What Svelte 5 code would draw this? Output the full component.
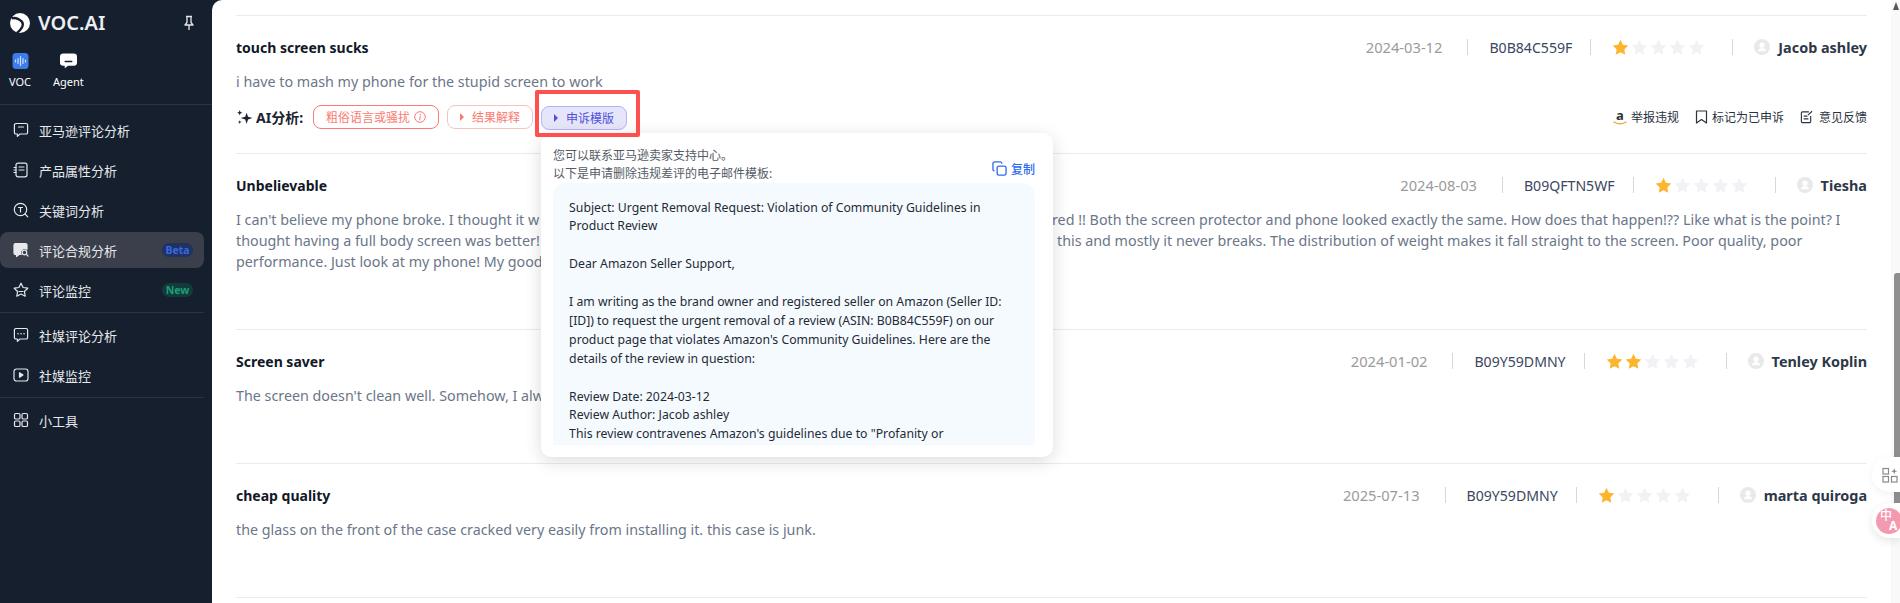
<script>
	const menuTop = [
		{ label: "亚马逊评论分析", icon: "chat" },
		{ label: "产品属性分析", icon: "doc" },
		{ label: "关键词分析", icon: "search" },
		{ label: "评论合规分析", icon: "shield", active: true, badge: "Beta" },
		{ label: "评论监控", icon: "star", badge: "New" }
	];
	const menuSocial = [
		{ label: "社媒评论分析", icon: "dots" },
		{ label: "社媒监控", icon: "play" }
	];
	const templateLines = [
		"Subject: Urgent Removal Request: Violation of Community Guidelines in",
		"Product Review",
		"",
		"Dear Amazon Seller Support,",
		"",
		"I am writing as the brand owner and registered seller on Amazon (Seller ID:",
		"[ID]) to request the urgent removal of a review (ASIN: B0B84C559F) on our",
		"product page that violates Amazon's Community Guidelines. Here are the",
		"details of the review in question:",
		"",
		"Review Date: 2024-03-12",
		"Review Author: Jacob ashley",
		'This review contravenes Amazon\'s guidelines due to "Profanity or'
	];
	const starPath = "M8 .8l2.2 4.7 5.1.7-3.7 3.6.9 5.1L8 12.5l-4.5 2.4.9-5.1L.7 6.2l5.1-.7z";
</script>

{#snippet menuIcon(name)}
	<svg class="menu-icon" viewBox="0 0 16 16" fill="none" stroke="currentColor" stroke-width="1.2" stroke-linejoin="round" stroke-linecap="round">
		{#if name === "chat"}
			<path d="M3 1.5h10a1.6 1.6 0 0 1 1.6 1.6v7.3a1.6 1.6 0 0 1-1.6 1.6H7l-2.6 2.4v-2.4H3a1.6 1.6 0 0 1-1.6-1.6V3.1A1.6 1.6 0 0 1 3 1.5z" />
			<path d="M5.5 5h5" />
		{:else if name === "doc"}
			<rect x="3" y="1.2" width="11" height="13.6" rx="2" />
			<path d="M6 5h5M6 8h5M1 5.5h2M1 8h2M1 10.5h2" />
		{:else if name === "search"}
			<circle cx="7.5" cy="7.5" r="6.2" />
			<path d="M5.5 5.5h4M7.5 5.5v4.5M12 12l2.8 2.8" />
		{:else if name === "shield"}
			<path fill="currentColor" d="M2.5 1.5h10A1.5 1.5 0 0 1 14 3v4.2a4 4 0 0 0-5.8 5.3H6l-2.5 2v-2h-1A1.5 1.5 0 0 1 1 11V3a1.5 1.5 0 0 1 1.5-1.5z" />
			<circle cx="11.5" cy="10.5" r="2.3" />
			<path d="M13.2 12.2l1.8 1.8" />
		{:else if name === "star"}
			<path d="M8 1.2l2.1 4.3 4.7.7-3.4 3.3.8 4.7L8 12l-4.2 2.2.8-4.7L1.2 6.2l4.7-.7z" />
			<path d="M6 9.5h4" />
		{:else if name === "dots"}
			<path d="M3 1.5h10a1.6 1.6 0 0 1 1.6 1.6v7.3a1.6 1.6 0 0 1-1.6 1.6H7l-2.6 2.4v-2.4H3a1.6 1.6 0 0 1-1.6-1.6V3.1A1.6 1.6 0 0 1 3 1.5z" />
			<path d="M5 6.8h.1M8 6.8h.1M11 6.8h.1" stroke-width="1.5" />
		{:else if name === "play"}
			<rect x="1" y="2" width="14" height="12" rx="2.5" />
			<path fill="currentColor" d="M6.5 5.8L10 8l-3.5 2.2z" />
		{:else}
			<rect x="1.5" y="1.5" width="5.5" height="5.5" rx="1.3" />
			<rect x="9" y="1.5" width="5.5" height="5.5" rx="1.3" />
			<rect x="1.5" y="9" width="5.5" height="5.5" rx="1.3" />
			<rect x="9" y="9" width="5.5" height="5.5" rx="1.3" />
		{/if}
	</svg>
{/snippet}

{#snippet menuRow(item)}
	<div class="menu-item" class:active={item.active}>
		{@render menuIcon(item.icon)}
		<span class="menu-label">{item.label}</span>
		{#if item.badge}
			<span class="badge" class:beta={item.badge === "Beta"} class:new={item.badge === "New"}>{item.badge}</span>
		{/if}
	</div>
{/snippet}

{#snippet meta(date, asin, rating, author)}
	<div class="meta">
		<span class="date">{date}</span>
		<span class="sep"></span>
		<span class="asin">{asin}</span>
		<span class="sep"></span>
		<span class="stars">
			{#each [1, 2, 3, 4, 5] as n}
				<svg viewBox="0 0 16 16" class="star" class:on={n <= rating}><path d={starPath} /></svg>
			{/each}
		</span>
		<span class="sep"></span>
		<svg class="avatar" viewBox="0 0 16 16">
			<circle cx="8" cy="8" r="8" fill="#e8e9eb" />
			<circle cx="8" cy="6.2" r="2.6" fill="#fff" />
			<path d="M3.8 12.3c.5-2.3 2.2-3.2 4.2-3.2s3.7.9 4.2 3.2z" fill="#fff" />
		</svg>
		<span class="author">{author}</span>
	</div>
{/snippet}

<div class="layout">
	<aside class="sidebar">
		<div class="brand">
			<svg class="logo" viewBox="0 0 20 20">
				<circle cx="10" cy="10" r="10" fill="#fff" />
				<path d="M1.5 5.5C5 4 7 5.5 9 6.5c2.5 1.2 4 2.500 3.800 5C12.600 14.500 10 17.500 7 20" fill="none" stroke="#151f2e" stroke-width="2.4" />
				<path d="M0 0h5L0 6z" fill="#151f2e" />
			</svg>
			<span class="brand-name">VOC.AI</span>
			<svg class="pin" viewBox="0 0 12 16" fill="none" stroke="#e6e8ec" stroke-width="1.3" stroke-linejoin="round">
				<path d="M3 1.5h6M4 1.5v6L2 10h8L8 7.5v-6M6 10v5" />
			</svg>
		</div>
		<div class="apps">
			<div class="app">
				<svg class="app-icon" viewBox="0 0 16 16">
					<rect width="16" height="16" rx="3.5" fill="#3b7de9" />
					<path d="M3 7v2M5.5 5.5v5M8 3.5v9M10.500 5.500v5M13 7v2" stroke="#cfe0fb" stroke-width="1.2" stroke-linecap="round" />
				</svg>
				<span>VOC</span>
			</div>
			<div class="app">
				<svg class="app-icon" viewBox="0 0 18 16">
					<path d="M3.5 0h11A3.5 3.5 0 0 1 18 3.5v6a3.5 3.5 0 0 1-3.5 3.5H8.5L5 15.8V13H3.5A3.5 3.5 0 0 1 0 9.5v-6A3.5 3.5 0 0 1 3.5 0z" fill="#fff" />
					<path d="M5.5 8.5h7" stroke="#151f2e" stroke-width="1.4" stroke-linecap="round" />
				</svg>
				<span>Agent</span>
			</div>
		</div>
		<div class="menu menu-first">
			{#each menuTop as item}
				{@render menuRow(item)}
			{/each}
		</div>
		<div class="menu menu-group">
			{#each menuSocial as item}
				{@render menuRow(item)}
			{/each}
		</div>
		<div class="menu menu-group">
			{@render menuRow({ label: "小工具", icon: "grid" })}
		</div>
	</aside>

	<main class="content">
		<article class="review first">
			<header class="review-head">
				<h3>touch screen sucks</h3>
				{@render meta("2024-03-12", "B0B84C559F", 1, "Jacob ashley")}
			</header>
			<p class="body">i have to mash my phone for the stupid screen to work</p>
			<div class="ai-row">
				<div class="ai-left">
					<svg class="spark" viewBox="0 0 16 16" fill="#1b2330">
						<path d="M10 3.5l1.3 3.700L15.500 8.500l-4.200 1.300L10 14 8.700 9.800 4.500 8.500l4.200-1.300z" />
						<path d="M3.5 1l.7 1.800L6 3.500l-1.800.7-.7 1.800-.7-1.800L1 3.500l1.800-.7z" />
						<path d="M3.5 10.500l.5 1.300 1.300.5-1.300.5-.5 1.200-.5-1.200-1.300-.5 1.300-.5z" />
					</svg>
					<strong>AI分析:</strong>
					<span class="chip chip-red">
						粗俗语言或骚扰
						<svg class="info" viewBox="0 0 12 12" fill="none" stroke="#fa7a70" stroke-width="1">
							<circle cx="6" cy="6" r="5.3" />
							<path d="M6.2 5.2L5.8 8.8M6.3 3.2v.6" stroke-linecap="round" />
						</svg>
					</span>
					<span class="chip chip-soft"><i class="tri"></i>结果解释</span>
					<div class="template-wrap">
						<span class="chip chip-blue"><i class="tri"></i>申诉模版</span>
						<span class="highlight"></span>
						<div class="popup">
							<div class="popup-head">
								<p>您可以联系亚马逊卖家支持中心。<br />以下是申请删除违规差评的电子邮件模板:</p>
								<span class="copy">
									<svg viewBox="0 0 16 16" fill="none" stroke="#2f6bed" stroke-width="1.4">
										<rect x="5.5" y="5.5" width="9.5" height="9.5" rx="2" />
										<path d="M10.5 2.8V2.5A1.5 1.5 0 0 0 9 1H3a2 2 0 0 0-2 2v6a1.5 1.5 0 0 0 1.5 1.5h.3" />
									</svg>
									复制
								</span>
							</div>
							<div class="template">
								{#each templateLines as line}
									<div class="template-line">{line}</div>
								{/each}
							</div>
						</div>
					</div>
				</div>
				<div class="actions">
					<span class="action">
						<span class="amazon">a<svg viewBox="0 0 14 4" fill="none" stroke="#f0a030" stroke-width="1.1"><path d="M.5 .8C4 3.5 10 3.5 13.5 .8" /></svg></span>
						举报违规
					</span>
					<span class="action">
						<svg viewBox="0 0 12 14" fill="none" stroke="#2b3240" stroke-width="1.2" stroke-linejoin="round"><path d="M1 1h10v12L6 9.5 1 13z" /></svg>
						标记为已申诉
					</span>
					<span class="action">
						<svg viewBox="0 0 14 14" fill="none" stroke="#2b3240" stroke-width="1.2"><path d="M9.5 1.5H2.5a1 1 0 0 0-1 1v9.500a1 1 0 0 0 1 1h8a1 1 0 0 0 1-1V6M4 6h4M4 9h5M8.5 5L13 .8" /></svg>
						意见反馈
					</span>
				</div>
			</div>
		</article>

		<article class="review">
			<header class="review-head">
				<h3>Unbelievable</h3>
				{@render meta("2024-08-03", "B09QFTN5WF", 1, "Tiesha")}
			</header>
			<div class="body split">
				<span>I can't believe my phone broke. I thought it w</span>
				<span>red !! Both the screen protector and phone looked exactly the same. How does that happen!?? Like what is the point? I</span>
				<span>thought having a full body screen was better!</span>
				<span class="indent">this and mostly it never breaks. The distribution of weight makes it fall straight to the screen. Poor quality, poor</span>
				<span>performance. Just look at my phone! My good</span>
			</div>
		</article>

		<article class="review">
			<header class="review-head">
				<h3>Screen saver</h3>
				{@render meta("2024-01-02", "B09Y59DMNY", 2, "Tenley Koplin")}
			</header>
			<p class="body">The screen doesn't clean well. Somehow, I always</p>
		</article>

		<article class="review">
			<header class="review-head">
				<h3>cheap quality</h3>
				{@render meta("2025-07-13", "B09Y59DMNY", 1, "marta quiroga")}
			</header>
			<p class="body">the glass on the front of the case cracked very easily from installing it. this case is junk.</p>
		</article>
	</main>

	<div class="scrollbar"><i class="arrow"></i><i class="thumb"></i></div>

	<div class="float-tools">
		<svg viewBox="0 0 16 16" fill="none" stroke="#8a8a8a" stroke-width="1.2">
			<rect x="1" y="1.5" width="5.5" height="5.5" />
			<rect x="1" y="9.5" width="5.5" height="5.5" />
			<rect x="9.5" y="9.5" width="5.5" height="5.5" />
			<path d="M12.2 1l.8 2.4 2.4.8-2.4.8-.8 2.4-.8-2.4L9 4.200l2.400-.8z" fill="#8a8a8a" stroke="none" />
		</svg>
	</div>
	<div class="float-translate"><span class="translate-dot"><b>中</b><b>A</b></span></div>
</div>

<style>
	:global(body) {
		margin: 0;
		background: #151f2e;
		font-family: "Noto Sans", "Noto Sans CJK SC", sans-serif;
		overflow: hidden;
	}

	.layout {
		position: relative;
		display: flex;
		height: 603px;
		overflow: hidden;
	}

	.sidebar {
		flex: 0 0 212px;
		color: #e6e8ec;
	}

	.brand {
		display: flex;
		align-items: center;
		height: 20px;
		padding: 13px 17px 0 10px;
	}

	.logo {
		width: 20px;
		height: 20px;
	}

	.brand-name {
		margin-left: 8px;
		flex: 1;
		font-size: 20px;
		font-weight: 600;
		line-height: 20px;
		color: #eceef1;
	}

	.pin {
		width: 12px;
		height: 16px;
	}

	.apps {
		display: flex;
		gap: 22px;
		height: 51px;
		padding: 20px 0 0 9px;
		border-bottom: 1px solid #2a3444;
	}

	.app {
		display: flex;
		flex-direction: column;
		align-items: center;
		gap: 6px;
		font-size: 11px;
		line-height: 14px;
		color: #fff;
	}

	.app-icon {
		width: 17px;
		height: 16px;
	}

	.menu-first {
		margin-right: 8px;
		padding-top: 3px;
	}

	.menu-group {
		margin-right: 8px;
		border-top: 1px solid #2a3444;
	}

	.menu-item {
		display: flex;
		align-items: center;
		height: 36px;
		margin: 4px 0;
		padding: 0 11px 0 13px;
		border-radius: 8px;
		font-size: 13px;
		color: #e6e8ec;
	}

	.menu-item.active {
		background: #3a3f4b;
	}

	.menu-icon {
		width: 16px;
		height: 16px;
		flex: none;
	}

	.menu-label {
		margin-left: 10px;
		flex: 1;
	}

	.badge {
		width: 31px;
		height: 14px;
		border-radius: 7px;
		font-size: 10.5px;
		font-weight: 700;
		line-height: 14px;
		text-align: center;
	}

	.badge.beta {
		background: #1f3260;
		color: #3a66e4;
	}

	.badge.new {
		background: #123c3c;
		color: #1f9e74;
	}

	.content {
		flex: 1;
		min-width: 0;
		padding: 15px 33px 0 24px;
		background: #fff;
		border-radius: 10px 0 0 0;
		position: relative;
	}

	.review {
		padding: 21px 0 57px;
		border-bottom: 1px solid #e9ebee;
	}

	.review.first {
		padding-bottom: 24px;
		border-top: 1px solid #e9ebee;
	}

	.review-head {
		display: flex;
		align-items: center;
		justify-content: space-between;
		height: 20px;
	}

	h3 {
		margin: 0;
		font-size: 14px;
		font-weight: 700;
		color: #111827;
	}

	.meta {
		display: flex;
		align-items: center;
		font-size: 14.1px;
		color: #3b4660;
	}

	.date {
		font-size: 14.7px;
		color: #9b9b9b;
		margin-right: 25px;
	}

	.sep {
		width: 1px;
		height: 16px;
		background: #d3d8df;
		margin-right: 21px;
	}

	.asin {
		margin-right: 18px;
	}

	.stars {
		display: flex;
		gap: 2px;
		margin-right: 27px;
	}

	.star {
		width: 17px;
		height: 17px;
		fill: #f0f2f5;
	}

	.star.on {
		fill: #fdb52d;
	}

	.avatar {
		width: 16px;
		height: 16px;
		margin-right: 8px;
	}

	.author {
		font-size: 14.4px;
		font-weight: 700;
		color: #2d3748;
	}

	.body {
		margin: 14px 0 0;
		font-size: 14.3px;
		line-height: 21px;
		color: #6b7689;
	}

	.split {
		display: grid;
		grid-template-columns: 816px 1fr;
		white-space: nowrap;
	}

	.indent {
		padding-left: 5px;
	}

	.ai-row {
		display: flex;
		align-items: center;
		justify-content: space-between;
		margin-top: 13px;
		height: 24px;
	}

	.ai-left {
		display: flex;
		align-items: center;
	}

	.spark {
		width: 17px;
		height: 17px;
		margin-right: 3px;
	}

	.ai-left strong {
		font-size: 14px;
		color: #1b2330;
		margin-right: 10px;
	}

	.chip {
		box-sizing: border-box;
		display: inline-flex;
		align-items: center;
		height: 24px;
		padding: 0 12px;
		border: 1px solid #ff7a75;
		border-radius: 8px;
		font-size: 12px;
		color: #fa7a70;
		white-space: nowrap;
	}

	.chip-soft {
		margin: 0 8px;
		border-color: #f6c4c0;
	}

	.chip-blue {
		background: #e6e6fa;
		border-color: #b3b3fb;
		color: #5050dc;
	}

	.info {
		width: 12px;
		height: 12px;
		margin-left: 4px;
	}

	.tri {
		width: 0;
		height: 0;
		margin-right: 8px;
		border-left: 4px solid currentColor;
		border-top: 4px solid transparent;
		border-bottom: 4px solid transparent;
	}

	.template-wrap {
		position: relative;
	}

	.highlight {
		position: absolute;
		z-index: 6;
		top: -15px;
		left: -6px;
		box-sizing: border-box;
		width: 105px;
		height: 47px;
		border: 4px solid #ff5050;
		border-radius: 2px;
		pointer-events: none;
	}

	.popup {
		position: absolute;
		z-index: 5;
		top: 28px;
		left: 0;
		box-sizing: border-box;
		width: 512px;
		height: 324px;
		padding: 12px 18px 12px 12px;
		background: #fff;
		border-radius: 10px;
		box-shadow: 0 4px 18px rgba(0, 0, 0, 0.14);
	}

	.popup-head {
		display: flex;
		align-items: flex-end;
		justify-content: space-between;
		height: 38px;
	}

	.popup-head p {
		margin: 0;
		font-size: 12px;
		line-height: 18px;
		color: #555b66;
	}

	.copy {
		display: flex;
		align-items: center;
		gap: 4px;
		padding-bottom: 5px;
		font-size: 12px;
		font-weight: 500;
		color: #2f6bed;
	}

	.copy svg {
		width: 15px;
		height: 15px;
	}

	.template {
		box-sizing: border-box;
		height: 262px;
		padding: 16px 16px 0;
		background: #f5faff;
		border-radius: 12px 12px 0 0;
		overflow: hidden;
		font-size: 12.25px;
		line-height: 18.9px;
		color: #242a35;
	}

	.template-line {
		min-height: 18.9px;
		white-space: nowrap;
	}

	.actions {
		display: flex;
		align-items: center;
		gap: 16px;
	}

	.action {
		display: flex;
		align-items: center;
		gap: 4px;
		font-size: 12px;
		color: #2b3240;
	}

	.action:last-child {
		gap: 6px;
	}

	.action svg {
		width: 13px;
		height: 14px;
	}

	.amazon {
		position: relative;
		width: 14px;
		height: 16px;
		font-size: 13px;
		font-weight: 700;
		line-height: 13px;
		text-align: center;
	}

	.amazon svg {
		position: absolute;
		left: 0;
		bottom: 0;
		width: 14px;
		height: 4px;
	}

	.scrollbar {
		position: absolute;
		top: 0;
		right: 0;
		width: 9px;
		height: 603px;
		background: #f9f9f9;
	}

	.arrow {
		position: absolute;
		top: 2px;
		right: 1px;
		border-left: 3.5px solid transparent;
		border-right: 3.5px solid transparent;
		border-bottom: 8px solid #555;
	}

	.thumb {
		position: absolute;
		top: 273px;
		left: 3px;
		right: 0;
		height: 230px;
		background: #8e8e8e;
		border-radius: 3px 0 0 0;
	}

	.float-tools {
		position: absolute;
		top: 457px;
		right: 0;
		display: flex;
		align-items: center;
		width: 18px;
		height: 35px;
		padding-left: 10px;
		background: #fff;
		border-radius: 18px 0 0 18px;
		box-shadow: 0 2px 8px rgba(0, 0, 0, 0.06);
	}

	.float-tools svg {
		width: 16px;
		height: 16px;
		flex: none;
	}

	.float-translate {
		position: absolute;
		top: 503px;
		right: 0;
		display: flex;
		align-items: center;
		width: 24px;
		height: 35px;
		padding-left: 4px;
		background: #fff;
		border-radius: 18px 0 0 18px;
		box-shadow: 0 3px 10px rgba(0, 0, 0, 0.1);
		overflow: hidden;
	}

	.translate-dot {
		flex: none;
		position: relative;
		width: 26px;
		height: 26px;
		border-radius: 50%;
		background: #f49ab0;
		color: #fff;
		font-size: 12px;
		line-height: 12px;
	}

	.translate-dot b {
		position: absolute;
		top: 2px;
		left: 4px;
		font-weight: 500;
	}

	.translate-dot b + b {
		top: 12px;
		left: 13px;
		font-weight: 700;
	}
</style>
